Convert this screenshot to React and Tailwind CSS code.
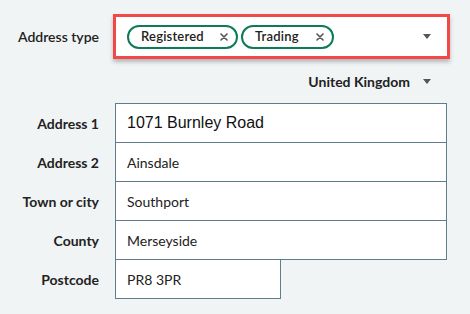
import React from "react";

const rows = [
  { label: "Address 1", value: "1071 Burnley Road", big: true },
  { label: "Address 2", value: "Ainsdale" },
  { label: "Town or city", value: "Southport" },
  { label: "County", value: "Merseyside" },
  { label: "Postcode", value: "PR8 3PR", short: true },
];

function Cross() {
  return (
    <svg width="8" height="8" viewBox="0 0 8 8" className="shrink-0">
      <path d="M1 1L7 7M7 1L1 7" stroke="#555" strokeWidth="1.6" strokeLinecap="round" />
    </svg>
  );
}

function Caret() {
  return (
    <svg width="8" height="5" viewBox="0 0 8 5">
      <path d="M0 0H8L4 5Z" fill="#555" />
    </svg>
  );
}

function Chip({ text, width }) {
  return (
    <div
      className={`h-[24px] ${width} border-2 border-[#0e7b57] rounded-full flex items-center justify-between pl-[12px] pr-[8px]`}
    >
      <span className="text-[13px] font-semibold tracking-[0.2px] text-[#222]">{text}</span>
      <Cross />
    </div>
  );
}

export default function App() {
  return (
    <div className="min-h-screen bg-[#f1f4f5] font-['Lato',sans-serif] text-[#222]">
      <div className="pt-[14px] pr-[23px]">
        {/* ADDRESS TYPE */}
        <div className="flex items-center h-[45px]">
          <label className="w-[99px] shrink-0 text-right text-[14px] font-semibold">
            Address type
          </label>
          <div className="ml-[14px] -mr-[3px] flex-1 h-full border-[3px] border-[#f24848] bg-white shadow-[0_3px_4px_rgba(0,0,0,0.25)] flex items-center pl-[11px] pr-[16px]">
            <div className="flex items-center gap-[3px]">
              <Chip text="Registered" width="w-[111px]" />
              <Chip text="Trading" width="w-[93px]" />
            </div>
            <div className="ml-auto flex items-center">
              <Caret />
            </div>
          </div>
        </div>

        {/* COUNTRY */}
        <div className="h-[44px] flex items-center justify-end">
          <span className="text-[14px] font-bold">United Kingdom</span>
          <span className="ml-[13px] mr-[16px] flex items-center">
            <Caret />
          </span>
        </div>

        {/* FIELDS */}
        {rows.map((r, i) => (
          <div key={r.label} className={`flex items-center ${i > 0 ? "-mt-px" : ""}`}>
            <label className="w-[99px] shrink-0 text-right text-[14px] font-bold">
              {r.label}
            </label>
            <div
              className={`ml-[16px] h-[40px] border border-[#5e7e8b] bg-white flex items-center pl-[11px] ${
                r.short ? "w-[166px]" : "flex-1"
              }`}
            >
              {r.big ? (
                <span className="font-['Liberation_Sans',sans-serif] text-[16px] text-[#111]">
                  {r.value}
                </span>
              ) : (
                <span className="text-[14px] text-[#222]">{r.value}</span>
              )}
            </div>
          </div>
        ))}
      </div>
    </div>
  );
}
